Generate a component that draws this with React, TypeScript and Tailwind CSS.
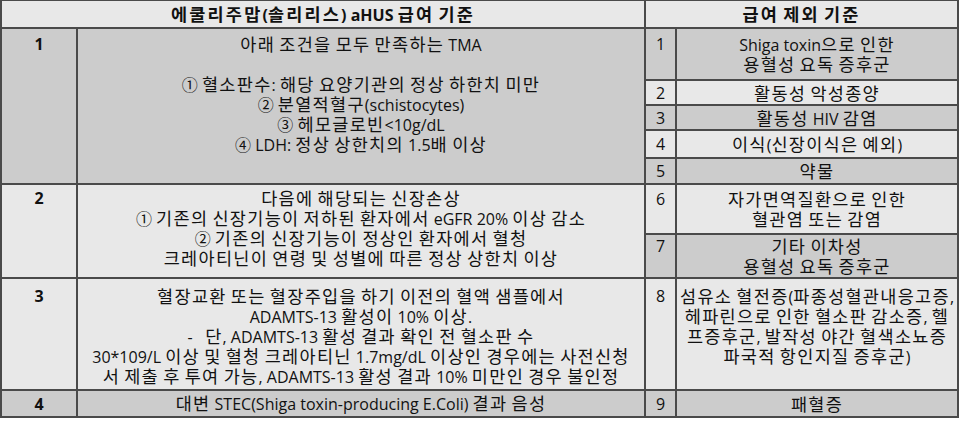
import React from 'react'

const font = { fontFamily: '"Open Sans", "Noto Sans CJK KR", sans-serif' }

const LIGHT = 'bg-[#e8e8e8]'
const GRAY = 'bg-[#cccccc]'

const HANGUL = /([\uAC00-\uD7A3\u3131-\u318E]+)/

// hangul runs are set a bit larger/wider so the lines get the width of the original font
function T({ s, k = 'text-[17.5px] tracking-[1.3px]' }: { s: string; k?: string }) {
  const parts = s.split(HANGUL)
  return (
    <span>
      {parts.map((p, i) =>
        i % 2 === 1 ? (
          <span key={i} className={k}>
            {p}
          </span>
        ) : (
          <React.Fragment key={i}>{p}</React.Fragment>
        ),
      )}
    </span>
  )
}

function Lines({ lines }: { lines: string[] }) {
  return (
    <>
      {lines.map((l, i) => (
        <div key={i} className="h-[20px] whitespace-pre">
          <T s={l} />
        </div>
      ))}
    </>
  )
}

type Excl = { no: number; lines: string[]; tone: string; top?: boolean }

const exclusions: Excl[] = [
  { no: 1, lines: ['Shiga toxin으로 인한', '용혈성 요독 증후군'], tone: GRAY },
  { no: 2, lines: ['활동성 악성종양'], tone: LIGHT },
  { no: 3, lines: ['활동성 HIV 감염'], tone: GRAY },
  { no: 4, lines: ['이식(신장이식은 예외)'], tone: LIGHT },
  { no: 5, lines: ['약물'], tone: GRAY },
  { no: 6, lines: ['자가면역질환으로 인한', '혈관염 또는 감염'], tone: LIGHT },
  { no: 7, lines: ['기타 이차성', '용혈성 요독 증후군'], tone: GRAY },
  {
    no: 8,
    lines: [
      '섬유소 혈전증(파종성혈관내응고증,',
      '헤파린으로 인한 혈소판 감소증, 헬',
      '프증후군, 발작성 야간 혈색소뇨증',
      '파국적 항인지질 증후군)',
    ],
    tone: LIGHT,
    top: true,
  },
  { no: 9, lines: ['패혈증'], tone: GRAY },
]

const rowStart = [2, 3, 4, 5, 6, 7, 8, 9, 10, 11]

export default function App() {
  return (
    <div className="w-[960px] h-[426px] bg-white" style={font}>
      <div
        className="grid w-[959px] bg-[#4a4a4a] gap-[2px] p-[2px] pt-[1px] text-[16px] leading-[20px] text-[#111]"
        style={{
          gridTemplateColumns: '74px 566px 29px 280px',
          gridTemplateRows: '26px 50px 23px 23px 26px 24px 48px 42px 110px 25px',
        }}
      >
        {/* header */}
        <div className={`${LIGHT} col-start-1 col-span-2 row-start-1 flex items-center justify-center font-bold`}>
          <T s="에쿨리주맙(솔리리스) aHUS 급여 기준" k="text-[17.5px] tracking-[2.2px]" />
        </div>
        <div className={`${LIGHT} col-start-3 col-span-2 row-start-1 flex items-center justify-center font-bold`}>
          <T s="급여 제외 기준" k="text-[17.5px] tracking-[2.2px]" />
        </div>

        {/* criteria 1 */}
        <div className={`${GRAY} col-start-1 row-start-2 row-span-5 text-center font-bold pt-[5px]`}>1</div>
        <div className={`${GRAY} col-start-2 row-start-2 row-span-5 text-center pt-[5px]`}>
          <Lines
            lines={[
              '아래 조건을 모두 만족하는 TMA',
              '',
              '① 혈소판수: 해당 요양기관의 정상 하한치 미만',
              '② 분열적혈구(schistocytes)',
              '③ 헤모글로빈<10g/dL',
              '④ LDH: 정상 상한치의 1.5배 이상',
            ]}
          />
        </div>

        {/* criteria 2 */}
        <div className={`${LIGHT} col-start-1 row-start-7 row-span-2 text-center font-bold pt-[3px]`}>2</div>
        <div className={`${LIGHT} col-start-2 row-start-7 row-span-2 text-center pt-[3px]`}>
          <Lines
            lines={[
              '다음에 해당되는 신장손상',
              '① 기존의 신장기능이 저하된 환자에서 eGFR 20% 이상 감소',
              '② 기존의 신장기능이 정상인 환자에서 혈청',
              '크레아티닌이 연령 및 성별에 따른 정상 상한치 이상',
            ]}
          />
        </div>

        {/* criteria 3 */}
        <div className={`${LIGHT} col-start-1 row-start-9 text-center font-bold pt-[7px]`}>3</div>
        <div className={`${LIGHT} col-start-2 row-start-9 text-center pt-[7px]`}>
          <Lines
            lines={[
              '혈장교환 또는 혈장주입을 하기 이전의 혈액 샘플에서',
              'ADAMTS-13 활성이 10% 이상.',
              '-   단, ADAMTS-13 활성 결과 확인 전 혈소판 수',
              '30*109/L 이상 및 혈청 크레아티닌 1.7mg/dL 이상인 경우에는 사전신청',
              '서 제출 후 투여 가능, ADAMTS-13 활성 결과 10% 미만인 경우 불인정',
            ]}
          />
        </div>

        {/* criteria 4 */}
        <div className={`${GRAY} col-start-1 row-start-10 flex items-center justify-center font-bold`}>4</div>
        <div className={`${GRAY} col-start-2 row-start-10 flex items-center justify-center`}>
          <T s="대변 STEC(Shiga toxin-producing E.Coli) 결과 음성" />
        </div>

        {/* exclusions */}
        {exclusions.map((e, i) => (
          <React.Fragment key={e.no}>
            <div
              className={`${e.tone} col-start-3 flex flex-col text-center ${e.top ? 'justify-start pt-[7px]' : 'justify-center'}`}
              style={{ gridRowStart: rowStart[i] }}
            >
              <div className="h-[20px]">{e.no}</div>
              {e.lines.slice(1).map((_, k) => (
                <div key={k} className="h-[20px]" />
              ))}
            </div>
            <div
              className={`${e.tone} col-start-4 flex flex-col text-center ${e.top ? 'justify-start pt-[7px]' : 'justify-center'}`}
              style={{ gridRowStart: rowStart[i] }}
            >
              <Lines lines={e.lines} />
            </div>
          </React.Fragment>
        ))}
      </div>
    </div>
  )
}
